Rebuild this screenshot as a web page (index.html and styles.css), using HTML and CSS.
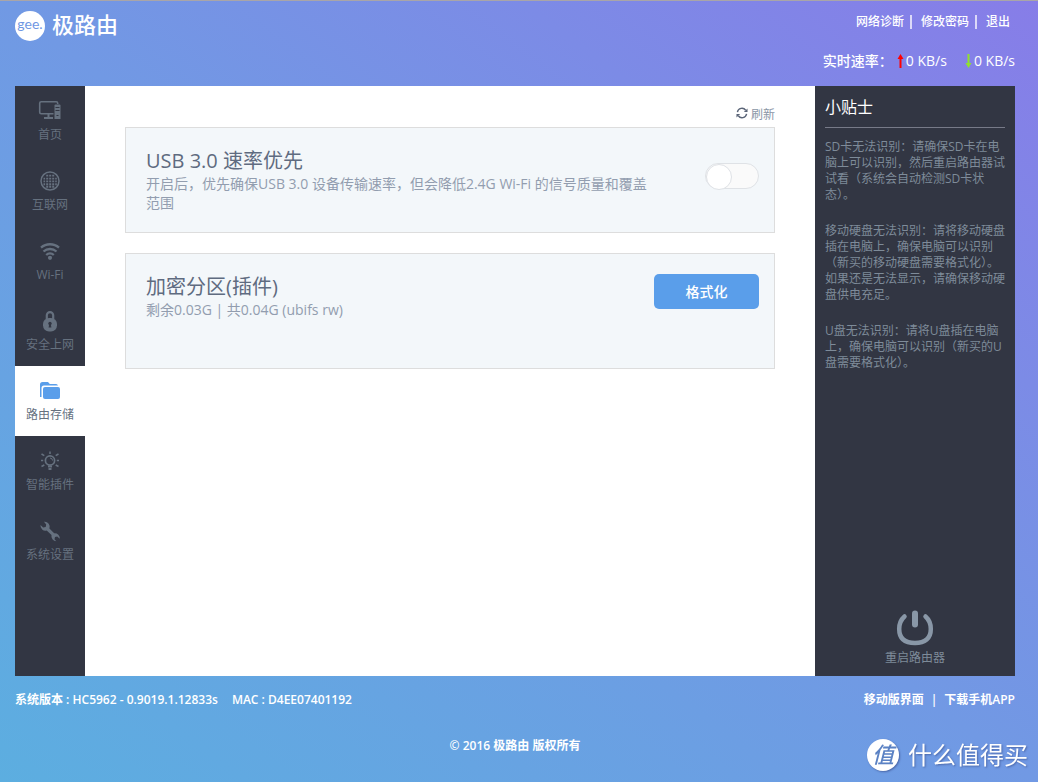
FILE: index.html
```html
<!DOCTYPE html>
<html lang="zh-CN">
<head>
<meta charset="utf-8">
<title>极路由</title>
<link rel="stylesheet" href="styles.css">
</head>
<body>
<div class="page">
  <header class="header">
    <a class="logo" href="#">
      <span class="logo-badge">gee.</span>
      <span class="logo-name">极路由</span>
    </a>
    <div class="header-side">
      <nav class="links">
        <a href="#">网络诊断</a><a href="#">修改密码</a><a href="#">退出</a>
      </nav>
      <div class="rate">
        <span>实时速率：</span>
        <span class="rate-item">
          <svg width="7" height="14" viewBox="0 0 7 14"><path d="M3.500 0 6.500 5H4.500v9h-2V5H.5z" fill="#f00"/></svg>0 KB/s</span>
        <span class="rate-item rate-down">
          <svg width="7" height="14" viewBox="0 0 7 14"><path d="M3.500 14 6.500 9H4.500V0h-2v9H.5z" fill="#8fe12d"/></svg>0 KB/s</span>
      </div>
    </div>
  </header>

  <div class="panel">
    <nav class="sidebar">
      <a class="nav-item" href="#">
        <svg width="24" height="24" viewBox="0 0 24 24" fill="none" stroke="currentColor">
          <rect x="1.700" y="2.700" width="18" height="12" rx="1.500" stroke-width="1.600"/>
          <path d="M10.500 15v3M6 19h9" stroke-width="2"/>
          <path d="M15.500 5h8v15h-8z" fill="#323643" stroke="none"/>
          <path d="M17.500 5.500h4a1 1 0 0 1 1 1V20h-6V6.500a1 1 0 0 1 1-1z" fill="currentColor" stroke="none"/>
          <path d="M17.500 8.500h4M17.500 11.500h4M18.500 16.500h2" stroke="#323643" stroke-width="1.200"/>
        </svg>
        <span>首页</span>
      </a>
      <a class="nav-item" href="#">
        <svg width="24" height="24" viewBox="0 0 24 24" fill="none" stroke="currentColor">
          <circle cx="12" cy="12" r="9" stroke-width="1.500"/>
          <path d="M8.200 6.600h2M11.200 6.600h2M14.200 6.600h2M5.500 9.600h1.600M8.200 9.600h2M11.200 9.600h2M14.200 9.600h2M17.200 9.600h1.600M5.500 12.400h1.600M8.200 12.400h2M11.200 12.400h2M14.200 12.400h2M17.200 12.400h1.600M5.500 15.200h1.600M8.200 15.200h2M11.200 15.200h2M14.200 15.200h2M17.200 15.200h1.600M8.200 17.800h2M11.200 17.800h2M14.200 17.800h2" stroke-width="1.900"/>
        </svg>
        <span>互联网</span>
      </a>
      <a class="nav-item" href="#">
        <svg width="24" height="24" viewBox="0 0 24 24" fill="none" stroke="currentColor" stroke-width="2.300">
          <path d="M3 8.700a13.500 13.500 0 0 1 18 0M5.500 12.500a9.700 9.700 0 0 1 13 0M8.200 16a5.600 5.600 0 0 1 7.600 0"/>
          <circle cx="12" cy="18.800" r="2.100" fill="currentColor" stroke="none"/>
        </svg>
        <span>Wi-Fi</span>
      </a>
      <a class="nav-item" href="#">
        <svg width="24" height="24" viewBox="0 0 24 24" fill="none">
          <path d="M8.800 10V6.300a3.200 3.200 0 0 1 6.400 0V10" stroke="currentColor" stroke-width="2.200"/>
          <rect x="5" y="9" width="14" height="13.500" rx="6" fill="currentColor"/>
          <circle cx="12" cy="14.500" r="1.700" fill="#323643"/>
          <path d="M11.200 15h1.600l.6 3.500h-2.800z" fill="#323643"/>
        </svg>
        <span>安全上网</span>
      </a>
      <a class="nav-item nav-active" href="#">
        <svg width="24" height="24" viewBox="0 0 24 24" fill="#5a9eea">
          <path d="M2 18V5.500A2.500 2.500 0 0 1 4.500 3H10l1.800 2H18a2 2 0 0 1 2 1.500H6A2.500 2.500 0 0 0 3.500 9v9z"/>
          <rect x="5" y="8" width="17" height="12" rx="2"/>
        </svg>
        <span>路由存储</span>
      </a>
      <a class="nav-item" href="#">
        <svg width="24" height="24" viewBox="0 0 24 24" fill="none" stroke="currentColor" stroke-width="1.500">
          <circle cx="12" cy="11.500" r="4.600" stroke-width="1.700"/>
          <path d="M10 17.500h4M10.500 20h3" stroke-width="2"/>
          <path d="M12 9a2.500 2.500 0 0 1 2.500 2.500" stroke-width="1"/>
          <path d="M12 2.500V5M3.500 5l2.800 1.700M20.500 5l-2.800 1.700M3 11.500h2.200M18.800 11.500H21M3.500 17.500 6.300 16M20.500 17.500 17.700 16"/>
        </svg>
        <span>智能插件</span>
      </a>
      <a class="nav-item" href="#">
        <svg width="24" height="24" viewBox="0 0 24 24" fill="currentColor">
          <path d="M6 2.800a5 5 0 0 1 5.400 6.800l4.800 4.700a5 5 0 0 1 5.600 5.500l-2.600-2.300-2.200.6-.5 2.200 1.800 1.900a5 5 0 0 1-4.800-6.100L8.700 11.500A5 5 0 0 1 2.500 6l2.700 2.600 2.500-.7.500-2.500z"/>
        </svg>
        <span>系统设置</span>
      </a>
    </nav>

    <main class="content">
      <div class="toolbar">
        <button class="refresh" type="button">
          <svg width="12" height="12" viewBox="0 0 13 12" fill="none" stroke="#5b6578" stroke-width="1.500">
            <path d="M1.500 5A5 5 0 0 1 10.500 3M11.500 7A5 5 0 0 1 2.500 9"/>
            <path d="M12.500 1v4h-4zM.5 11V7h4z" fill="#5b6578" stroke="none"/>
          </svg>
          <span>刷新</span>
        </button>
      </div>
      <section class="card">
        <div class="card-text">
          <h2 id="usb-title">USB 3.0 速率优先</h2>
          <p>开启后，优先确保USB 3.0 设备传输速率，但会降低2.4G Wi-Fi 的信号质量和覆盖范围</p>
        </div>
        <input class="switch" type="checkbox" role="switch" aria-labelledby="usb-title">
      </section>
      <section class="card card-disk">
        <div class="card-text">
          <h2>加密分区(插件)</h2>
          <p>剩余0.03G | 共0.04G (ubifs rw)</p>
        </div>
        <button class="format" type="button">格式化</button>
      </section>
    </main>

    <aside class="tips">
      <h3>小贴士</h3>
      <p>SD卡无法识别：请确保SD卡在电脑上可以识别，然后重启路由器试试看（系统会自动检测SD卡状态）。</p>
      <p>移动硬盘无法识别：请将移动硬盘插在电脑上，确保电脑可以识别（新买的移动硬盘需要格式化）。如果还是无法显示，请确保移动硬盘供电充足。</p>
      <p>U盘无法识别：请将U盘插在电脑上，确保电脑可以识别（新买的U盘需要格式化）。</p>
      <button class="reboot" type="button">
        <svg width="38" height="38" viewBox="0 0 38 38" fill="none" stroke="#8997a7" stroke-linecap="round">
          <path d="M8.500 7.500C4.500 11 3.200 14.500 3.200 20 3.200 29.500 9 34 19 34S34.800 29.500 34.800 20C34.800 14.500 33.500 11 29.500 7.500" stroke-width="4.500"/>
          <path d="M19 4.500v11" stroke-width="6"/>
        </svg>
        <span>重启路由器</span>
      </button>
    </aside>
  </div>

  <footer class="footer">
    <div class="footer-row">
      <div class="version"><span>系统版本 : HC5962 - 0.9019.1.12833s</span><span>MAC : D4EE07401192</span></div>
      <div class="footer-links"><a href="#">移动版界面</a><span>|</span><a href="#">下载手机APP</a></div>
    </div>
    <p class="copyright">© 2016 极路由 版权所有</p>
  </footer>
</div>
<div class="watermark"><span class="watermark-badge">值</span><span>什么值得买</span></div>
</body>
</html>
```
FILE: styles.css
```css
* { box-sizing: border-box; }

body {
  margin: 0;
  min-height: 100vh;
  border-top: 1px solid #a9a5a8;
  background: linear-gradient(to top right, #5caee0, #7199e4 50%, #877de8) no-repeat;
  font-family: "Open Sans", "Noto Sans CJK SC", sans-serif;
  font-size: 12px;
  line-height: 16px;
  color: #fff;
}

a { color: inherit; text-decoration: none; }
h2, h3, p { margin: 0; font-weight: 400; }
button { padding: 0; border: 0; background: none; font: inherit; color: inherit; cursor: pointer; }
svg { display: block; flex: none; }

.page { padding: 0 23px 0 15px; }

.header {
  display: flex;
  justify-content: space-between;
  height: 85px;
  padding-top: 10px;
}
.logo { display: flex; align-items: flex-start; gap: 7px; height: 30px; }
.logo-badge {
  width: 30px;
  height: 30px;
  border-radius: 50%;
  background: #fff;
  color: #6f97e3;
  font: 14px/26px Lato, sans-serif;
  text-align: center;
}
.logo-name { font-size: 22px; line-height: 26px; font-weight: 500; }
.header-side { display: flex; flex-direction: column; align-items: flex-end; gap: 22px; padding-top: 4px; }
.links { display: flex; padding-right: 5px; line-height: 14px; font-weight: 500; }
.links a + a { margin-left: 6px; padding-left: 9px; border-left: 2px solid #dcd9f8; }
.rate { display: flex; font-size: 14px; line-height: 20px; font-weight: 500; }
.rate-item { display: flex; align-items: center; gap: 2px; margin-left: 4px; }
.rate-down { margin-left: 18px; }

.panel { display: grid; grid-template-columns: 70px 1fr 200px; min-height: 590px; }

.sidebar { background: #323643; }
.nav-item {
  display: flex;
  flex-direction: column;
  align-items: center;
  gap: 4px;
  height: 70px;
  padding-top: 13px;
  color: #66717f;
}
.nav-active { background: #fff; }

.content { padding: 20px 40px; background: #fff; }
.toolbar { display: flex; justify-content: flex-end; height: 21px; }
.refresh { display: flex; gap: 3px; color: #8a96a6; }
.refresh svg { margin-top: 1px; }
.refresh span { line-height: 18px; }
.card {
  display: flex;
  justify-content: space-between;
  min-height: 106px;
  padding: 20px 15px 18px 20px;
  border: 1px solid #ddd;
  background: #f3f7fa;
}
.card-disk { min-height: 116px; margin-top: 20px; }
.card-text { max-width: 510px; }
.card h2 { font-size: 20px; line-height: 26px; color: #5f6b80; }
.card p { font-size: 14px; line-height: 19px; color: #929daf; }
.switch {
  appearance: none;
  flex: none;
  width: 54px;
  height: 26px;
  margin: 15px 0 0;
  border: 1px solid #dfe2e6;
  border-radius: 13px;
  background: #fafafa;
  cursor: pointer;
}
.switch::before {
  content: "";
  display: block;
  width: 24px;
  height: 24px;
  border: 1px solid #dfe2e6;
  border-radius: 50%;
  background: #fff;
}
.switch:checked { background: #5a9eea; }
.switch:checked::before { margin-left: auto; }
.format {
  flex: none;
  width: 105px;
  height: 35px;
  border-radius: 5px;
  background: #5a9eea;
  color: #fff;
  font-size: 14px;
  font-weight: 500;
}

.tips {
  display: flex;
  flex-direction: column;
  padding: 10px;
  background: #323643;
  color: #7e8b99;
}
.tips h3 {
  margin-bottom: 11px;
  padding-bottom: 9px;
  border-bottom: 1px solid #777a88;
  font-size: 16px;
  line-height: 22px;
  color: #fff;
}
.tips p { margin-bottom: 20px; }
.reboot {
  display: flex;
  flex-direction: column;
  align-items: center;
  gap: 3px;
  margin-top: auto;
}

.footer { font-weight: 600; }
.footer-row { display: flex; justify-content: space-between; padding-top: 16px; }
.version { display: flex; gap: 14px; }
.footer-links { display: flex; gap: 7px; }
.copyright { margin-top: 30px; font-weight: 600; text-align: center; }

.watermark {
  position: fixed;
  right: 10px;
  bottom: 11px;
  display: flex;
  align-items: center;
  gap: 9px;
  font-size: 24px;
  line-height: 32px;
  text-shadow: 1px 1px 2px #4a66a8;
}
.watermark-badge {
  width: 32px;
  height: 32px;
  border-radius: 50%;
  background: #fff;
  color: #5b82c4;
  font-size: 22px;
  line-height: 30px;
  font-style: italic;
  font-weight: 500;
  text-align: center;
  text-shadow: none;
  box-shadow: 1px 1px 2px #4a66a8;
}
```
